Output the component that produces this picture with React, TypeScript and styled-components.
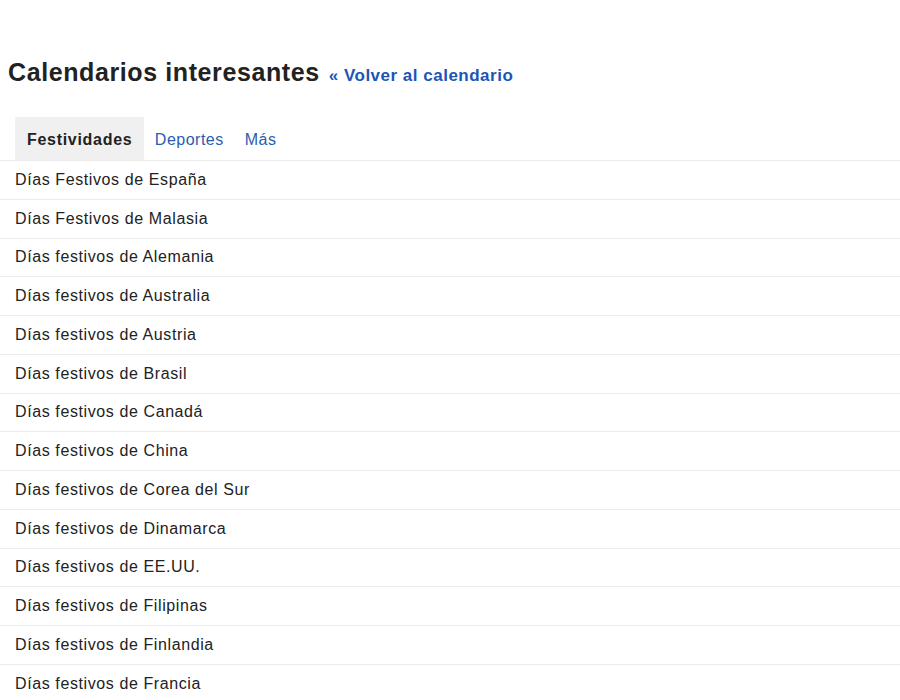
import React from "react";
import styled, { createGlobalStyle } from "styled-components";

const Global = createGlobalStyle`
  html, body { margin: 0; padding: 0; background: #fff; }
  body { font-family: Arial, "Liberation Sans", sans-serif; color: #222; }
`;

const Page = styled.div`
  padding-top: 57px;
`;

const Header = styled.div`
  display: flex;
  align-items: baseline;
  gap: 9px;
  padding-left: 8px;
  height: 30px;
`;

const Title = styled.h1`
  margin: 0;
  font-size: 25px;
  font-weight: bold;
  letter-spacing: 0.6px;
  color: #222;
  line-height: 30px;
`;

const BackLink = styled.a`
  font-size: 17px;
  font-weight: bold;
  letter-spacing: 0.5px;
  color: #1c55b5;
  text-decoration: none;
`;

const Tabs = styled.div`
  display: flex;
  margin-top: 30px;
  padding-left: 15px;
  height: 43px;
  border-bottom: 1px solid #ebebeb;
`;

const Tab = styled.div<{ $active?: boolean }>`
  display: flex;
  align-items: center;
  padding: 2px ${(p) => (p.$active ? "12px" : "10.5px")} 0;
  background: ${(p) => (p.$active ? "#f0f0f0" : "transparent")};
  font-size: 16px;
  font-weight: ${(p) => (p.$active ? "bold" : "normal")};
  letter-spacing: ${(p) => (p.$active ? "0.7px" : "0.5px")};
  color: ${(p) => (p.$active ? "#222" : "#2a5db0")};
`;

const List = styled.div`
  display: flex;
  flex-direction: column;
`;

const Row = styled.div`
  height: 37.75px;
  display: flex;
  align-items: center;
  padding-left: 15px;
  font-size: 16px;
  letter-spacing: 0.6px;
  color: #222;
  border-bottom: 1px solid #ebebeb;
`;

const items = [
  "Días Festivos de España",
  "Días Festivos de Malasia",
  "Días festivos de Alemania",
  "Días festivos de Australia",
  "Días festivos de Austria",
  "Días festivos de Brasil",
  "Días festivos de Canadá",
  "Días festivos de China",
  "Días festivos de Corea del Sur",
  "Días festivos de Dinamarca",
  "Días festivos de EE.UU.",
  "Días festivos de Filipinas",
  "Días festivos de Finlandia",
  "Días festivos de Francia",
];

export default function App() {
  return (
    <>
      <Global />
      <Page>
        <Header>
          <Title>Calendarios interesantes</Title>
          <BackLink href="#">« Volver al calendario</BackLink>
        </Header>
        <Tabs>
          <Tab $active>Festividades</Tab>
          <Tab>Deportes</Tab>
          <Tab>Más</Tab>
        </Tabs>
        <List>
          {items.map((t) => (
            <Row key={t}>{t}</Row>
          ))}
        </List>
      </Page>
    </>
  );
}
